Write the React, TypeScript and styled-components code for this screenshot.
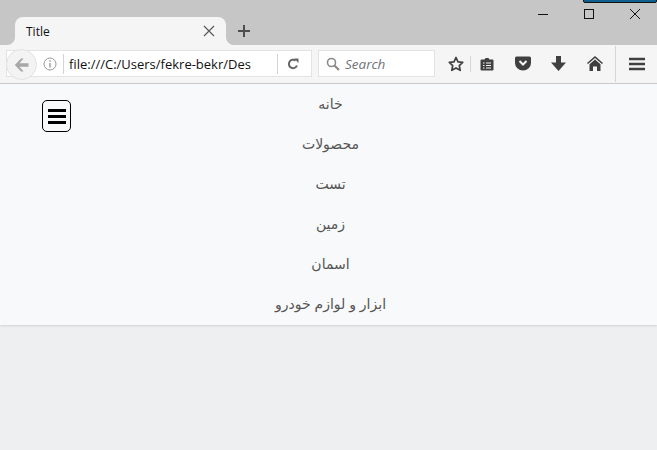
import React from "react";
import styled, { createGlobalStyle } from "styled-components";

const Global = createGlobalStyle`
  html, body { margin: 0; padding: 0; background: #eeeff1; }
  body { width: 657px; height: 450px; overflow: hidden; font-family: "Open Sans", "Liberation Sans", sans-serif; }
  * { box-sizing: border-box; }
`;

const Chrome = styled.header`
  display: flex;
  flex-direction: column;
  position: relative;
`;
const TabBar = styled.div`
  height: 45px;
  background: #c6c6c6;
  display: flex;
  align-items: flex-end;
  padding-left: 15px;
  position: relative;
`;
const Tab = styled.div`
  position: relative;
  width: 211px;
  height: 28px;
  background: #f5f5f5;
  border-radius: 8px 8px 0 0;
  display: flex;
  align-items: center;
  justify-content: space-between;
  padding: 0 11px 0 11px;
  font-size: 12px;
  color: #111;
  font-family: "Open Sans", sans-serif;
  &::before, &::after {
    content: "";
    position: absolute;
    bottom: 0;
    width: 8px;
    height: 8px;
  }
  &::before { left: -8px; background: radial-gradient(circle at 0 0, #c6c6c6 7.5px, #f5f5f5 8.5px); }
  &::after { right: -8px; background: radial-gradient(circle at 100% 0, #c6c6c6 7.5px, #f5f5f5 8.5px); }
`;
const NewTab = styled.button`
  border: 0;
  background: none;
  padding: 0;
  margin: 0 0 7px 11px;
  width: 14px;
  height: 14px;
  display: flex;
`;
const WindowControls = styled.div`
  position: absolute;
  top: 9px;
  right: 17px;
  display: flex;
  gap: 36px;
`;
const PeekWindow = styled.div`
  position: absolute;
  top: -3px;
  right: 0;
  width: 74px;
  height: 6px;
  background: #0f5f8f;
  border: 1px solid #111;
  border-radius: 2px;
`;
const Toolbar = styled.div`
  height: 39px;
  background: #f5f5f5;
  border-bottom: 1px solid #c8c8c8;
  display: flex;
  align-items: center;
  padding: 0 0 1px 6px;
  position: relative;
`;
const BackButton = styled.div`
  position: absolute;
  left: 6px;
  top: 4px;
  width: 31px;
  height: 31px;
  border-radius: 50%;
  background: #f3f3f3;
  border: 1px solid #e2e2e2;
  display: flex;
  align-items: center;
  justify-content: center;
`;
const UrlBar = styled.div`
  flex: none;
  width: 306px;
  height: 27px;
  background: #fff;
  border: 1px solid #e3e3e3;
  display: flex;
  align-items: center;
  padding-left: 36px;
  font-size: 13px;
  color: #111;
`;
const InfoSlot = styled.span`
  display: flex;
  width: 20px;
`;
const UrlText = styled.span`
  border-left: 1px solid #d4d4d4;
  padding-left: 5px;
  width: 214px;
  height: 20px;
  line-height: 21px;
  white-space: nowrap;
`;
const ReloadSlot = styled.span`
  border-left: 1px solid #d4d4d4;
  height: 20px;
  width: 31px;
  display: flex;
  align-items: center;
  justify-content: center;
`;
const SearchBar = styled.div`
  flex: none;
  width: 117px;
  height: 27px;
  margin-left: 6px;
  background: #fff;
  border: 1px solid #e3e3e3;
  display: flex;
  align-items: center;
  gap: 5px;
  padding-left: 7px;
  font-size: 13.5px;
  font-style: italic;
  color: #6f7378;
`;
const Tools = styled.div`
  display: flex;
  flex: none;
  align-items: center;
  margin-left: 12px;
`;
const ToolIcon = styled.span<{ $w: number }>`
  width: ${p => p.$w}px;
  height: 18px;
  display: flex;
  align-items: center;
  justify-content: center;
`;
const Divider = styled.span<{ $h: number }>`
  width: 1px;
  height: ${p => p.$h}px;
  background: #d6d6d6;
`;
const Nav = styled.nav`
  background: #f8f9fa;
  height: 241px;
  display: grid;
  grid-template-columns: 1fr auto 1fr;
  box-shadow: 0 1px 2px rgba(0, 0, 0, 0.12);
  padding-left: 4px;
`;
const ToggleCell = styled.div`
  padding: 16px 0 0 38px;
`;
const Toggle = styled.button`
  width: 29px;
  height: 32px;
  background: transparent;
  border: 1px solid #000;
  border-radius: 5px;
  padding: 0;
  display: flex;
  flex-direction: column;
  align-items: center;
  justify-content: center;
  gap: 3px;
`;
const Bar = styled.span`
  width: 18px;
  height: 3px;
  background: #000;
`;
const Menu = styled.ul`
  list-style: none;
  margin: 0;
  padding: 0;
  direction: rtl;
  text-align: center;
`;
const MenuItem = styled.li`
  height: 40px;
  line-height: 40px;
  font-family: "Liberation Sans", "DejaVu Sans", sans-serif;
  font-size: 14px;
  color: #555;
  white-space: nowrap;
`;

const items = ["خانه", "محصولات", "تست", "زمین", "اسمان", "ابزار و لوازم خودرو"];

export default function App() {
  return (
    <>
      <Global />
      <Chrome>
        <TabBar>
          <Tab>
            <span>Title</span>
            <svg width="12" height="12" viewBox="0 0 12 12"><path d="M1 1l10 10M11 1L1 11" stroke="#555" strokeWidth="1.1" fill="none" /></svg>
          </Tab>
          <NewTab aria-label="New tab">
            <svg width="14" height="14" viewBox="0 0 14 14"><path d="M7 1v12M1 7h12" stroke="#4d4d4d" strokeWidth="2" fill="none" /></svg>
          </NewTab>
          <PeekWindow />
          <WindowControls>
            <svg width="10" height="10" viewBox="0 0 10 10"><path d="M0 5.500h10" stroke="#111" fill="none" /></svg>
            <svg width="10" height="10" viewBox="0 0 10 10"><rect x="0.5" y="0.5" width="9" height="9" stroke="#111" fill="none" /></svg>
            <svg width="10" height="10" viewBox="0 0 10 10"><path d="M0 0l10 10M10 0L0 10" stroke="#111" fill="none" /></svg>
          </WindowControls>
        </TabBar>
        <Toolbar>
          <UrlBar>
            <InfoSlot>
              <svg width="14" height="14" viewBox="0 0 14 14"><circle cx="7" cy="7" r="6" stroke="#999" fill="none" /><path d="M7 6v4.500M7 3.200v1.600" stroke="#999" strokeWidth="1.400" fill="none" /></svg>
            </InfoSlot>
            <UrlText>file:///C:/Users/fekre-bekr/Des</UrlText>
            <ReloadSlot>
              <svg width="12" height="12" viewBox="0 0 12 12"><path d="M10 7.500A4.200 4.200 0 1 1 8.600 2.600" stroke="#666" strokeWidth="2" fill="none" /><path d="M7 0.500h4.500V5z" fill="#666" /></svg>
            </ReloadSlot>
          </UrlBar>
          <BackButton>
            <svg width="15" height="14" viewBox="0 0 15 14"><path d="M7 0.500L0.800 7 7 13.500h2.600L5.500 8.700H14.500V5.300H5.500L9.600 0.500z" fill="#a8a8a8" /></svg>
          </BackButton>
          <SearchBar>
            <svg width="14" height="14" viewBox="0 0 14 14"><circle cx="5.500" cy="5.500" r="4" stroke="#8a8a8a" strokeWidth="1.600" fill="none" /><path d="M8.500 8.500L13 13" stroke="#8a8a8a" strokeWidth="2.200" fill="none" /></svg>
            <span>Search</span>
          </SearchBar>
          <Tools>
            <ToolIcon $w={17}>
              <svg width="16" height="16" viewBox="0 0 16 16"><path d="M8 1.500l2 4.300 4.700.6-3.400 3.200.9 4.700L8 11.900l-4.200 2.400.9-4.700L1.300 6.400l4.700-.6z" stroke="#404040" strokeWidth="1.700" strokeLinejoin="round" fill="none" /></svg>
            </ToolIcon>
            <ToolIcon $w={6} />
            <Divider $h={16} />
            <ToolIcon $w={31}>
              <svg width="14" height="14" viewBox="0 0 14 14"><path d="M1.500 2.500h3l1-1.500h3l1 1.500h3a1 1 0 0 1 1 1v9a1 1 0 0 1-1 1h-11a1 1 0 0 1-1-1v-9a1 1 0 0 1 1-1z" fill="#404040" /><path d="M3 6h1.500M6 6h5M3 8.500h1.500M6 8.500h5M3 11h1.500M6 11h5" stroke="#f5f5f5" fill="none" /></svg>
            </ToolIcon>
            <ToolIcon $w={41}>
              <svg width="16" height="15" viewBox="0 0 16 15"><path d="M1.500 0.500h13a1.500 1.500 0 0 1 1.500 1.500v5a8 7.500 0 0 1-16 0V2a1.500 1.500 0 0 1 1.500-1.500z" fill="#404040" /><path d="M4.500 5L8 8.500 11.500 5" stroke="#f5f5f5" strokeWidth="2" fill="none" /></svg>
            </ToolIcon>
            <ToolIcon $w={31}>
              <svg width="15" height="15" viewBox="0 0 15 15"><path d="M5 0h5v6.500h5L7.500 15 0 6.500h5z" fill="#404040" /></svg>
            </ToolIcon>
            <ToolIcon $w={41}>
              <svg width="16" height="15" viewBox="0 0 16 15"><path d="M8 0L0 7l1 1 7-6 7 6 1-1z" fill="#404040" /><path d="M8 3.500L2.500 8.300V15H6v-4.500h4V15h3.500V8.300z" fill="#404040" /></svg>
            </ToolIcon>
            <Divider $h={36} />
            <ToolIcon $w={42}>
              <svg width="16" height="14" viewBox="0 0 16 14"><path d="M0 2h16M0 7h16M0 12h16" stroke="#404040" strokeWidth="2.600" fill="none" /></svg>
            </ToolIcon>
          </Tools>
        </Toolbar>
      </Chrome>
      <Nav>
        <ToggleCell>
          <Toggle aria-label="Menu">
            <Bar />
            <Bar />
            <Bar />
          </Toggle>
        </ToggleCell>
        <Menu>
          {items.map(item => (
            <MenuItem key={item}>{item}</MenuItem>
          ))}
        </Menu>
      </Nav>
    </>
  );
}
